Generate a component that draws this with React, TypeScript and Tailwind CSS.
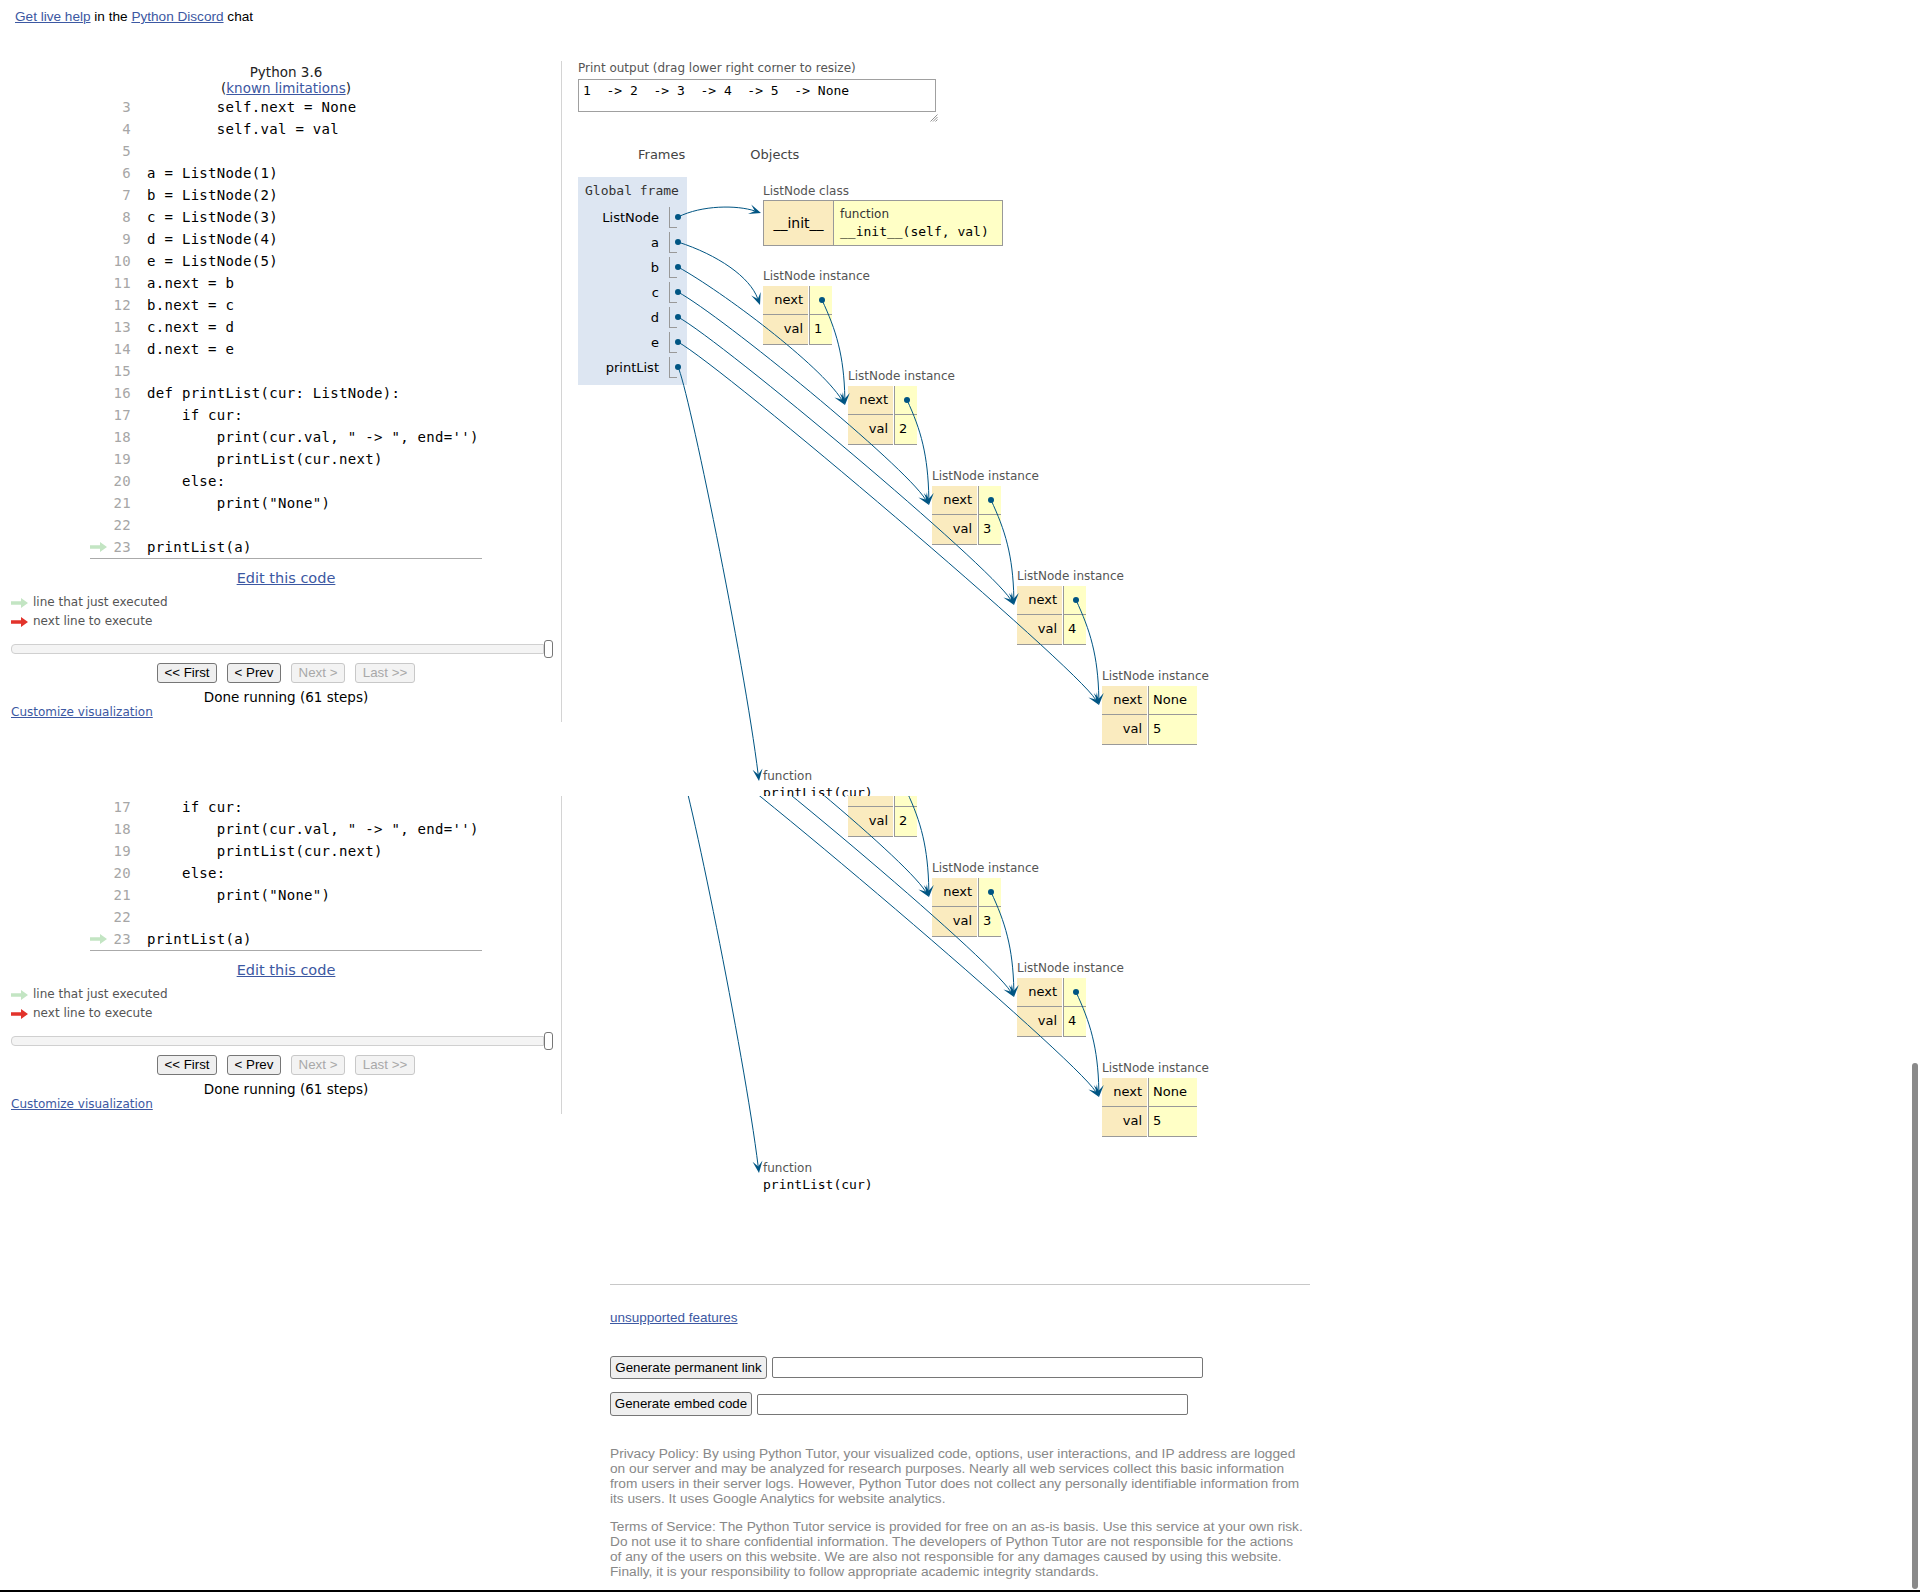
import React from "react";

type Pt = [number, number];

const SANS = "font-['DejaVu_Sans',Verdana,sans-serif]";
const MONO = "font-['DejaVu_Sans_Mono',monospace]";
const ARIAL = "font-['Liberation_Sans',Arial,sans-serif]";
const LINK = "text-[#3c58a2] underline";

const CODE: [number, string][] = [
  [3, "        self.next = None"],
  [4, "        self.val = val"],
  [5, ""],
  [6, "a = ListNode(1)"],
  [7, "b = ListNode(2)"],
  [8, "c = ListNode(3)"],
  [9, "d = ListNode(4)"],
  [10, "e = ListNode(5)"],
  [11, "a.next = b"],
  [12, "b.next = c"],
  [13, "c.next = d"],
  [14, "d.next = e"],
  [15, ""],
  [16, "def printList(cur: ListNode):"],
  [17, "    if cur:"],
  [18, "        print(cur.val, \" -> \", end='')"],
  [19, "        printList(cur.next)"],
  [20, "    else:"],
  [21, "        print(\"None\")"],
  [22, ""],
  [23, "printList(a)"],
];

function LegendArrow({ color }: { color: string }) {
  return (
    <svg width="17" height="10" viewBox="0 0 17 10">
      <path d="M0 3.2h10V0l7 5-7 5V6.8H0z" fill={color} />
    </svg>
  );
}

function Btn({ label, w, off }: { label: string; w: string; off?: boolean }) {
  return (
    <button
      className={
        off
          ? `${ARIAL} ${w} h-[20px] rounded-[3px] border border-[#c8c8c8] bg-[#f3f3f3] text-[13.3px] leading-[18px] text-[#a8a8a8]`
          : `${ARIAL} ${w} h-[20px] rounded-[3px] border border-[#767676] bg-[#efefef] text-[13.3px] leading-[18px] text-black`
      }
    >
      {label}
    </button>
  );
}

function CodePanel() {
  return (
    <div className="h-[661px] w-[562px] shrink-0 border-r border-[#d4d4d4] pl-[11px] pt-[3px]">
      <div className="text-center text-[13.5px] leading-[16px] text-[#222]">Python 3.6</div>
      <div className="text-center text-[13.5px] leading-[16px] text-[#222]">
        (<span className={LINK}>known limitations</span>)
      </div>
      <div className={`${MONO} mx-auto w-[392px] border-b border-[#aaa] text-[14px] tracking-[0.3px]`}>
        {CODE.map(([n, line]) => (
          <div key={n} className="flex h-[22px] items-center">
            <div className="flex w-[17px] justify-center">
              {n === 23 && <LegendArrow color="#c3e5c3" />}
            </div>
            <div className="w-[24px] text-right text-[#a6a6a6]">{n}</div>
            <div className="ml-[16px] whitespace-pre text-black">{line}</div>
          </div>
        ))}
      </div>
      <div className="mt-[10px] h-[18px] text-center text-[14.5px] leading-[18px]">
        <span className={LINK}>Edit this code</span>
      </div>
      <div className="mt-[6px] text-[12px] leading-[19px] text-[#555]">
        <div className="flex items-center gap-[5px]">
          <LegendArrow color="#c3e5c3" />
          <span>line that just executed</span>
        </div>
        <div className="flex items-center gap-[5px]">
          <LegendArrow color="#e2332b" />
          <span>next line to execute</span>
        </div>
      </div>
      <div className="mt-[9px] flex h-[18px] w-[542px] items-center">
        <div className="h-[10px] flex-1 rounded-l-[4px] border border-[#d0d0d0] bg-[#f4f4f4]" />
        <div className="h-[18px] w-[9px] rounded-[3px] border border-[#777] bg-white" />
      </div>
      <div className="mt-[5px] flex justify-center gap-[10px]">
        <Btn label="<< First" w="w-[60px]" />
        <Btn label="< Prev" w="w-[54px]" />
        <Btn label="Next >" w="w-[54px]" off />
        <Btn label="Last >>" w="w-[60px]" off />
      </div>
      <div className="mt-[6px] text-center text-[13.5px] leading-[16px] text-black">Done running (61 steps)</div>
      <div className="text-[12px] leading-[15px]">
        <span className={LINK}>Customize visualization</span>
      </div>
    </div>
  );
}

function Curve({ p0, c1, c2, p3 }: { p0: Pt; c1: Pt; c2: Pt; p3: Pt }) {
  const a = Math.atan2(p3[1] - c2[1], p3[0] - c2[0]);
  const cs = Math.cos(a);
  const sn = Math.sin(a);
  const L = 12;
  const W = 5;
  const F = 6.5;
  const bx = p3[0] - L * cs;
  const by = p3[1] - L * sn;
  const left: Pt = [bx - W * sn, by + W * cs];
  const right: Pt = [bx + W * sn, by - W * cs];
  const notch: Pt = [p3[0] - F * cs, p3[1] - F * sn];
  return (
    <g>
      <path d={`M${p0} C${c1} ${c2} ${notch}`} fill="none" stroke="#005583" strokeWidth={1} />
      <polygon points={`${p3} ${left} ${notch} ${right}`} fill="#005583" />
    </g>
  );
}

const VARS = ["ListNode", "a", "b", "c", "d", "e", "printList"];
const LEFTS = [185, 270, 354, 439, 524];
const TOPS = [121, 221, 321, 421, 521];

function Instance({ i }: { i: number }) {
  const last = i === 4;
  const valCls = last
    ? "ml-[1px] w-[49px] border-b border-l border-[#999] bg-[#ffffc6] pl-[4px]"
    : "ml-[1px] w-[23px] border-b border-l border-[#999] bg-[#ffffc6] pl-[4px]";
  return (
    <div className="absolute" style={{ left: LEFTS[i], top: TOPS[i] - 17 }}>
      <div className="whitespace-nowrap text-[12px] leading-[14px] text-[#555]">ListNode instance</div>
      <div className="mt-[3px] text-[13px] leading-[28px]">
        <div className="flex h-[29px]">
          <div className="w-[45px] border-b border-[#999] bg-[#faebbf] pr-[5px] text-right">next</div>
          <div className={valCls}>{last ? "None" : ""}</div>
        </div>
        <div className="flex h-[30px]">
          <div className="w-[45px] border-b border-[#999] bg-[#faebbf] pr-[5px] text-right">val</div>
          <div className={valCls}>{i + 1}</div>
        </div>
      </div>
    </div>
  );
}

function Canvas() {
  const curves: { p0: Pt; c1: Pt; c2: Pt; p3: Pt }[] = [
    { p0: [100, 52], c1: [124, 40], c2: [159, 40], p3: [183, 48] },
    { p0: [100, 77], c1: [140, 90], c2: [172, 112], p3: [182, 140] },
    { p0: [100, 202], c1: [110, 222], c2: [166, 495], p3: [181, 616] },
  ];
  for (let k = 1; k <= 4; k++) {
    const p0: Pt = [100, 77 + 25 * k];
    const p3: Pt = [LEFTS[k] - 3, TOPS[k] + 19];
    curves.push({ p0, c1: [p0[0] + 45, p0[1] + 25], c2: [p3[0] - 25, p3[1] - 40], p3 });
  }
  for (let i = 0; i < 4; i++) {
    const p0: Pt = [LEFTS[i] + 59, TOPS[i] + 14];
    const p3: Pt = [LEFTS[i + 1] - 3, TOPS[i + 1] + 19];
    curves.push({ p0, c1: [p0[0] + 14, p0[1] + 30], c2: [p3[0] - 1, p3[1] - 50], p3 });
  }

  return (
    <div className="relative h-[640px] w-[700px] pt-[12px]">
      {/* global frame */}
      <div className="h-[208px] w-[109px] bg-[#dde6f2]">
        <div className={`${MONO} h-[28px] pl-[7px] pt-[6px] text-[13px] leading-[16px] text-[#333]`}>Global frame</div>
        {VARS.map((v) => (
          <div key={v} className="flex h-[25px]">
            <div className="w-[81px] text-right text-[13px] leading-[25px] text-black">{v}</div>
            <div className="ml-[10px] mt-[2px] h-[21px] w-[8px] border-b border-l border-[#999]" />
          </div>
        ))}
      </div>

      {/* class */}
      <div className="absolute left-[185px] top-[19px]">
        <div className="text-[12px] leading-[14px] text-[#555]">ListNode class</div>
        <div className="mt-[2px] flex h-[46px] w-[240px] border border-[#999]">
          <div className="flex w-[70px] items-center justify-center border-r border-[#999] bg-[#faebbf] text-[14px]">
            __init__
          </div>
          <div className="flex-1 bg-[#ffffc6] pl-[6px] pt-[6px]">
            <div className="text-[12px] leading-[14px] text-[#333]">function</div>
            <div className={`${MONO} mt-[3px] text-[13px] leading-[16px]`}>__init__(self, val)</div>
          </div>
        </div>
      </div>

      {[0, 1, 2, 3, 4].map((i) => (
        <Instance key={i} i={i} />
      ))}

      {/* function object */}
      <div className="absolute left-[185px] top-[604px]">
        <div className="text-[12px] leading-[14px] text-[#555]">function</div>
        <div className={`${MONO} mt-[2px] text-[13px] leading-[16px]`}>printList(cur)</div>
      </div>

      <svg className="absolute left-0 top-0 overflow-visible" width="700" height="640">
        {curves.map((c, k) => (
          <Curve key={k} {...c} />
        ))}
        {VARS.map((v, k) => (
          <circle key={v} cx={100} cy={52 + 25 * k} r={3} fill="#005583" />
        ))}
        {[0, 1, 2, 3].map((i) => (
          <circle key={i} cx={LEFTS[i] + 59} cy={TOPS[i] + 14} r={3} fill="#005583" />
        ))}
      </svg>
    </div>
  );
}

function VizPanel() {
  return (
    <div className="flex-1 pl-[16px]">
      <div className="text-[12px] leading-[14px] text-[#555]">Print output (drag lower right corner to resize)</div>
      <div className={`${MONO} mt-[4px] h-[33px] w-[358px] whitespace-pre border border-[#a0a0a0] pl-[4px] pt-[3px] text-[13px] leading-[16px] text-black`}>
        1  -&gt; 2  -&gt; 3  -&gt; 4  -&gt; 5  -&gt; None
      </div>
      <div className="flex h-[10px] w-[360px] items-end justify-end">
        <svg width="8" height="8" viewBox="0 0 8 8">
          <path d="M7.5 0.5L0.5 7.5M7.5 3L3 7.5M7.5 5.5L5.5 7.5" stroke="#777" strokeWidth="0.8" />
        </svg>
      </div>
      <div className="mt-[23px] flex h-[20px] text-[13px] leading-[20px] text-[#444]">
        <span className="ml-[60px]">Frames</span>
        <span className="ml-[65px]">Objects</span>
      </div>
      <Canvas />
    </div>
  );
}

function Footer() {
  return (
    <div className={`${ARIAL} mx-auto mt-[20px] w-[700px] border-t border-[#c8c8c8]`}>
      <div className="pt-[25px] text-[13.5px] leading-[16px]">
        <span className={LINK}>unsupported features</span>
      </div>
      <div className="mt-[30px] flex items-center gap-[5px]">
        <button className="h-[23px] w-[157px] rounded-[3px] border border-[#767676] bg-[#efefef] text-[13.3px] text-black">
          Generate permanent link
        </button>
        <div className="h-[21px] w-[431px] rounded-[2px] border border-[#767676] bg-white" />
      </div>
      <div className="mt-[13px] flex items-center gap-[5px]">
        <button className="h-[24px] w-[142px] rounded-[3px] border border-[#767676] bg-[#efefef] text-[13.3px] text-black">
          Generate embed code
        </button>
        <div className="h-[21px] w-[431px] rounded-[2px] border border-[#767676] bg-white" />
      </div>
      <p className="mt-[30px] whitespace-nowrap text-[13.7px] leading-[15px] text-[#888]">
        Privacy Policy: By using Python Tutor, your visualized code, options, user interactions, and IP address are logged
        <br />
        on our server and may be analyzed for research purposes. Nearly all web services collect this basic information
        <br />
        from users in their server logs. However, Python Tutor does not collect any personally identifiable information from
        <br />
        its users. It uses Google Analytics for website analytics.
      </p>
      <p className="mt-[13px] whitespace-nowrap text-[13.7px] leading-[15px] text-[#888]">
        Terms of Service: The Python Tutor service is provided for free on an as-is basis. Use this service at your own risk.
        <br />
        Do not use it to share confidential information. The developers of Python Tutor are not responsible for the actions
        <br />
        of any of the users on this website. We are also not responsible for any damages caused by using this website.
        <br />
        Finally, it is your responsibility to follow appropriate academic integrity standards.
      </p>
    </div>
  );
}

function Page() {
  return (
    <div className={`${SANS} w-[1920px] bg-white text-black`}>
      <div className={`${ARIAL} h-[61px] pl-[15px] pt-[9px] text-[13.6px] leading-[16px]`}>
        <span className={LINK}>Get live help</span> in the <span className={LINK}>Python Discord</span> chat
      </div>
      <div className="flex h-[811px] items-start">
        <CodePanel />
        <VizPanel />
      </div>
      <Footer />
    </div>
  );
}

export default function App() {
  return (
    <div className="relative h-[1592px] w-[1920px] overflow-hidden bg-white">
      <div className="h-[796px] overflow-hidden">
        <Page />
      </div>
      <div className="h-[794px] overflow-hidden">
        <div className="-mt-[404px]">
          <Page />
        </div>
      </div>
      <div className="h-[2px] bg-black" />
      <div className="absolute right-[2px] top-[1063px] h-[526px] w-[6px] rounded-full bg-[#8a8a8a]" />
    </div>
  );
}
